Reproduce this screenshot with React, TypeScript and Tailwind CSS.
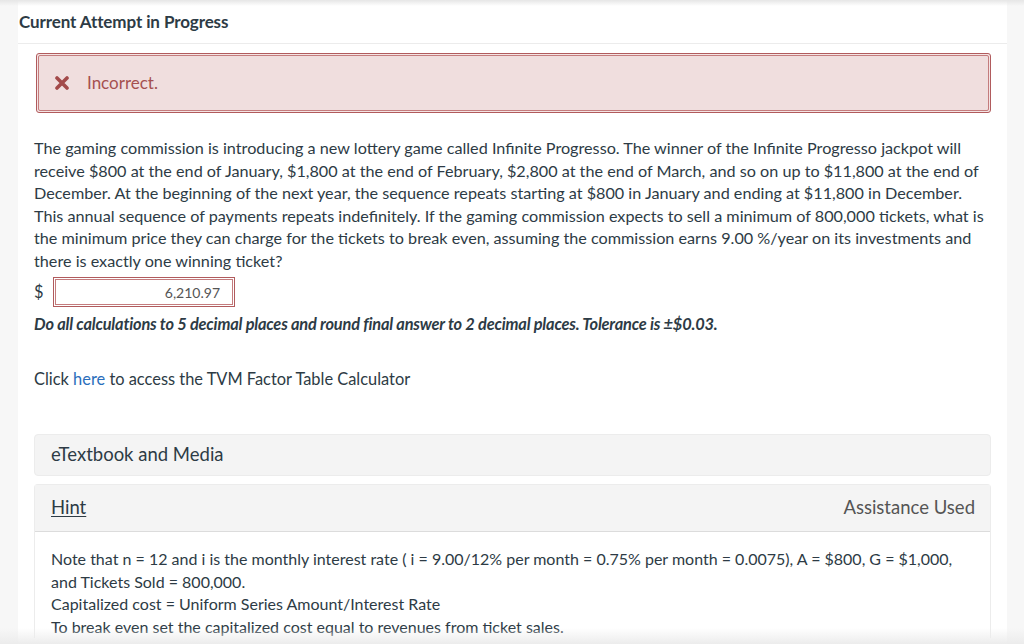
import React from 'react';

const font = { fontFamily: 'Lato, "Open Sans", sans-serif' };

export default function App() {
  return (
    <div className="relative h-[644px] w-[1024px] overflow-hidden bg-white text-[#2d3b45]" style={font}>
      {/* top shadow */}
      <div className="pointer-events-none absolute inset-x-0 top-0 h-[6px] bg-gradient-to-b from-[#e6e6e6] to-transparent" />
      {/* bottom fade */}
      <div className="pointer-events-none absolute inset-x-0 bottom-0 h-[16px] bg-gradient-to-t from-[#ececec] to-transparent" />

      <div className="flex h-full">
        <div className="w-[18px] shrink-0 bg-[#f7f7f7]" />

        <div className="flex-1 bg-white">
          <div className="flex h-[44px] items-center border-b border-[#ececec] pl-px">
            <h2 className="text-[17px] font-bold tracking-[-0.1px]">Current Attempt in Progress</h2>
          </div>

          <div className="pl-[16px] pr-[16px] pt-[9px]">
            {/* Incorrect banner */}
            <div className="ml-[2px] rounded-[3px] border border-[#b15b5d] bg-[#f4e4e4] p-px">
              <div className="flex h-[56px] items-center rounded-[2px] border border-[#c47c7d] bg-[#f0dede] pl-[16px]">
                <svg width="14" height="14" viewBox="0 0 14 14" className="shrink-0">
                  <path d="M2 2 L12 12 M12 2 L2 12" stroke="#a34a4a" strokeWidth="3.6" strokeLinecap="round" />
                </svg>
                <span className="ml-[18px] text-[17px] text-[#a55050]">Incorrect.</span>
              </div>
            </div>

            <p className="mt-[24px] text-[16.2px] leading-[22.5px]">
              The gaming commission is introducing a new lottery game called Infinite Progresso. The winner of the Infinite Progresso jackpot will receive $800 at the end of January, $1,800 at the end of February, $2,800 at the end of March, and so on up to $11,800 at the end of December. At the beginning of the next year, the sequence repeats starting at $800 in January and ending at $11,800 in December. This annual sequence of payments repeats indefinitely. If the gaming commission expects to sell a minimum of 800,000 tickets, what is the minimum price they can charge for the tickets to break even, assuming the commission earns 9.00 %/year on its investments and there is exactly one winning ticket?
            </p>

            <div className="mt-[5px] flex items-center">
              <span className="w-[19px] text-[16.4px]">$</span>
              <div className="h-[30px] w-[182px] border border-[#b15b5d] p-px">
                <div className="flex h-full items-center justify-end border border-[#c47c7d] pr-[12px] text-[14px] text-[#555]">
                  6,210.97
                </div>
              </div>
            </div>

            <p className="mt-[6px] text-[16.4px] font-bold italic leading-[22px] tracking-[-0.2px]">
              Do all calculations to 5 decimal places and round final answer to 2 decimal places. Tolerance is ±$0.03.
            </p>

            <p className="mt-[33px] text-[16.4px] leading-[22px]">
              Click <a className="text-[#2a6ebb]">here</a> to access the TVM Factor Table Calculator
            </p>

            <div className="mt-[44px] flex h-[42px] items-center rounded-[4px] border border-[#ececec] bg-[#f4f4f4] pl-[16px] text-[18.5px]">
              eTextbook and Media
            </div>

            <div className="mt-[8px] rounded-t-[4px] border border-b-0 border-[#ececec]">
              <div className="flex h-[47px] items-center justify-between border-b border-[#dcdcdc] bg-[#f4f4f4] pl-[16px] pr-[15px] text-[18.5px]">
                <span className="underline underline-offset-2">Hint</span>
                <span className="text-[#555]">Assistance Used</span>
              </div>
              <div className="px-[16px] pt-[16px] text-[16px] leading-[22.5px]">
                <p>
                  Note that n = 12 and i is the monthly interest rate ( i = 9.00/12% per month = 0.75% per month = 0.0075), A = $800, G = $1,000, and Tickets Sold = 800,000.
                </p>
                <p>Capitalized cost = Uniform Series Amount/Interest Rate</p>
                <p>To break even set the capitalized cost equal to revenues from ticket sales.</p>
              </div>
            </div>
          </div>
        </div>

        <div className="w-[17px] shrink-0 bg-[#f7f7f7]" />
      </div>
    </div>
  );
}
